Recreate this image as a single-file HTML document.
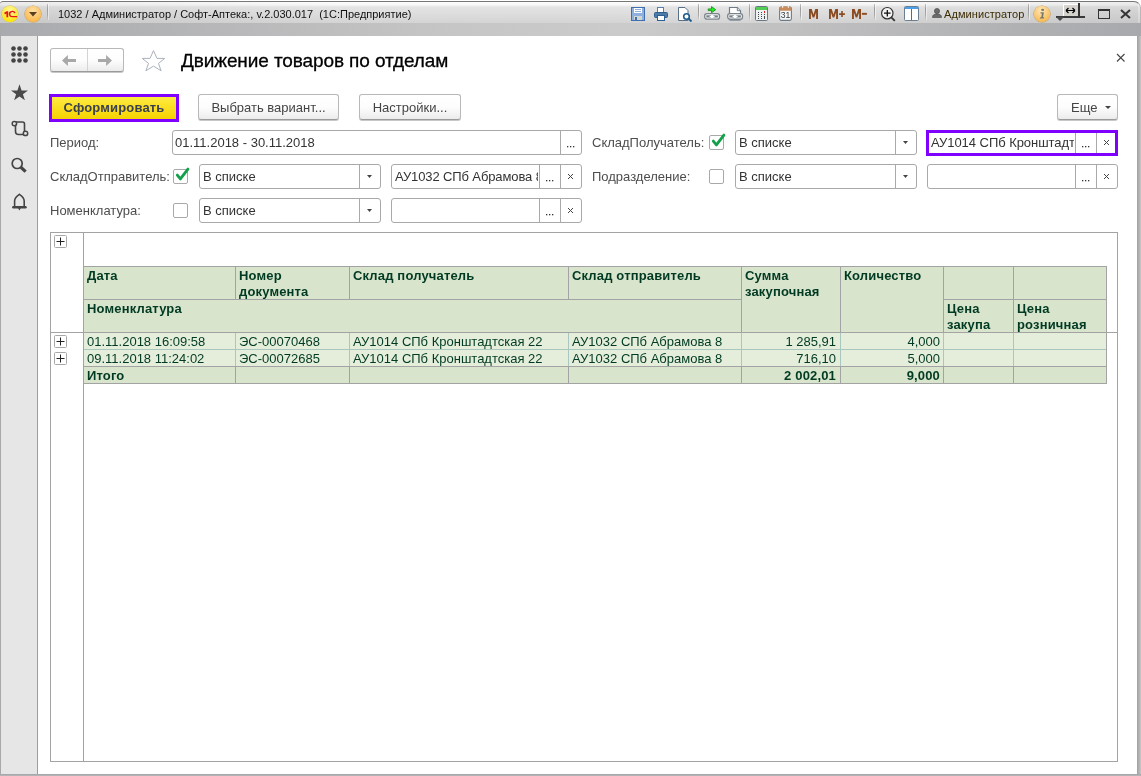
<!DOCTYPE html>
<html><head><meta charset="utf-8">
<style>
*{box-sizing:border-box}
html,body{margin:0;padding:0}
body{width:1141px;height:776px;position:relative;overflow:hidden;background:#fff;font-family:"Liberation Sans",sans-serif;color:#333}
.a{position:absolute}
#root{position:absolute;left:0;top:0;width:1141px;height:776px;will-change:transform}
.t{position:absolute;white-space:nowrap;font-size:13px;line-height:15px}
/* title bar */
#tb{left:0;top:1px;width:1141px;height:35px;border-top:1px solid #777;border-right:1px solid #b8b8b8;border-top-left-radius:3px;border-top-right-radius:7px;background:linear-gradient(#fdfdfd 0px,#f6f6f6 3px,#e4e4e4 5px,#d4d4d4 21px,#d4d4d4 22px)}
#tbline{left:2px;top:1px;width:1134px;height:1px;background:#777}
#band{left:0;top:23px;width:1141px;height:13px;background:linear-gradient(90deg,#a9aaad 0%,#c6c6c6 40%,#cbcbcb 55%,#a8a9ac 100%)}
#tbhl{left:0;top:2px;width:1138px;height:21px;background:linear-gradient(90deg,rgba(0,0,0,.06) 0%,rgba(0,0,0,0) 30%,rgba(0,0,0,0) 70%,rgba(0,0,0,.06) 100%)}
.sep{position:absolute;top:4px;width:1px;height:16px;background:linear-gradient(rgba(150,150,150,.5),#9a9a9a 30%,#a8a8a8 70%,rgba(180,180,180,.2));box-shadow:1px 0 0 rgba(255,255,255,.5)}
/* frame */
#lf{left:0;top:23px;width:1px;height:753px;background:#a8a8a8}
#sb{left:1px;top:36px;width:36px;height:738px;background:#e6e6e6}
#sbb{left:37px;top:36px;width:1px;height:738px;background:#9d9d9d}
#bf{left:0;top:774px;width:1141px;height:2px;background:linear-gradient(#a2a3a6,#b9b9bb)}
#rf{left:1137px;top:36px;width:4px;height:740px;background:linear-gradient(90deg,#9fa0a3,#b5b6b8 60%,#c8c8c8)}
/* buttons */
.btn{position:absolute;height:26px;border:1px solid #b8b8b8;border-bottom-color:#9a9a9a;border-radius:3px;background:linear-gradient(#ffffff,#fdfdfd 50%,#ececec);box-shadow:0 1px 0 #c8c8c8;color:#444;font-size:13px;line-height:25px;text-align:center;white-space:nowrap}
.inp{position:absolute;height:25px;border:1px solid #a9a9a9;border-radius:3px;background:#fff}
.div{position:absolute;top:0;width:1px;height:23px;background:#a9a9a9}
.lbl{position:absolute;white-space:nowrap;font-size:13px;line-height:15px;color:#4d4d4d}
.val{position:absolute;white-space:nowrap;font-size:13px;line-height:15px;color:#333}
.cb{position:absolute;width:15px;height:15px;border:1px solid #a9a9a9;border-radius:2px;background:#fff}
/* table */
.hl{position:absolute;height:1px;background:#a3a3a3}
.vl{position:absolute;width:1px;background:#a3a3a3}
.tx{position:absolute;white-space:nowrap;font-size:13px;line-height:16px;color:#003a22}
.b{font-weight:bold;letter-spacing:.16px}
</style></head><body><div id="root">

<!-- ============ TITLE BAR ============ -->
<div id="tb" class="a"></div>
<div id="tbhl" class="a"></div>
<div id="band" class="a"></div>


<!-- logo -->
<div class="a" style="left:2px;top:6px;width:16px;height:16px;border-radius:50%;background:radial-gradient(circle at 50% 30%,#fff6a8,#ffe600 80%);box-shadow:0 0 0 .5px #d8c040"></div>
<svg class="a" style="left:2px;top:6px" width="16" height="16"><path d="M2.2 6.8L4.6 5.2H6.2V11.2H4.4V7.6L2.9 8.4Z" fill="#e8121a"/><path d="M13.6 6.6A3.6 3.2 0 1 0 10.6 11.2H15.2V9.9H10.6A2 1.9 0 1 1 12.2 7.4Z" fill="#e8121a"/></svg>
<div class="a" style="left:25px;top:6px;width:16px;height:16px;border-radius:50%;background:radial-gradient(circle at 50% 30%,#ffe1a8,#f9b443 85%);box-shadow:0 0 0 .6px #c99a3a"></div>
<svg class="a" style="left:29px;top:12px" width="8" height="5"><path d="M0 0H8L4 4.5Z" fill="#5a4020"/></svg>
<div class="sep" style="left:47px"></div>
<div class="t" style="left:58px;top:8px;font-size:11px;line-height:13px;color:#111">1032 / Администратор / Софт-Аптека:, v.2.030.017&nbsp; (1С:Предприятие)</div>

<!-- toolbar icons -->
<svg class="a" style="left:631px;top:7px" width="14" height="14"><rect x=".5" y=".5" width="13" height="13" fill="#8fb0dc" stroke="#3f6fae"/><rect x="3" y="1" width="8" height="5" fill="#fff"/><rect x="4" y="2" width="6" height="1" fill="#8fb0dc"/><rect x="4" y="4" width="6" height="1" fill="#8fb0dc"/><rect x="3" y="9" width="8" height="4" fill="#d0d8d4"/><rect x="4" y="10" width="2" height="3" fill="#3f6fae"/></svg>
<svg class="a" style="left:654px;top:7px" width="14" height="14"><rect x="3.5" y=".5" width="6" height="5" fill="#fff" stroke="#5a7fa8"/><rect x=".5" y="5.5" width="13" height="5" rx="1" fill="#4e7ba8" stroke="#2f5f90"/><rect x="3.5" y="8.5" width="7" height="5" fill="#fff" stroke="#2f5f90"/></svg>
<svg class="a" style="left:678px;top:7px" width="15" height="15"><path d="M.5 .5H7L10 3.5V13.5H.5Z" fill="#fff" stroke="#5a6f88"/><circle cx="8.5" cy="9.5" r="2.8" fill="#fff" stroke="#1f5f8f" stroke-width="1.6"/><path d="M10.5 11.5L13.5 14.5" stroke="#1f5f8f" stroke-width="2"/></svg>
<div class="sep" style="left:698px"></div>
<svg class="a" style="left:704px;top:6px" width="17" height="15"><path d="M4.2 2.9H7.5V.6L11.7 3.7L7.5 6.8V4.6H4.2Z" fill="#22ee22" stroke="#1f8f1f" stroke-width=".9" stroke-linejoin="round"/><rect x=".7" y="7.6" width="14.8" height="5.6" rx="2.2" fill="#fbfbfb" stroke="#7b838b" stroke-width="1.3"/><rect x="2.3" y="9.3" width="4.6" height="2.2" fill="#76808a"/><rect x="9.3" y="9.3" width="4.6" height="2.2" fill="#76808a"/><rect x="5.6" y="9.9" width="5" height="1.1" fill="#fff"/></svg>
<svg class="a" style="left:727px;top:6px" width="17" height="16"><path d="M2.5 1.5H10.3L13.5 4.7V8.5H2.5Z" fill="#fff" stroke="#6d7b8a" stroke-width="1.2"/><path d="M10.3 1.5V4.7H13.5" fill="#dfe5ec" stroke="#6d7b8a" stroke-width=".9"/><rect x=".7" y="7.6" width="14.8" height="5.6" rx="2.2" fill="#fbfbfb" stroke="#7b838b" stroke-width="1.3"/><rect x="2.3" y="9.3" width="4.6" height="2.2" fill="#76808a"/><rect x="9.3" y="9.3" width="4.6" height="2.2" fill="#76808a"/><rect x="5.6" y="9.9" width="5" height="1.1" fill="#fff"/><rect x="2.5" y="13.4" width="11" height="1.2" fill="#6d7b8a"/></svg>
<div class="sep" style="left:749px"></div>
<svg class="a" style="left:755px;top:6px" width="13" height="15"><rect x=".5" y=".5" width="12" height="14" rx="1" fill="#eef1f4" stroke="#6a7884"/><rect x="1" y="1" width="11" height="3" fill="#55cc55"/><g fill="#444"><rect x="3" y="6" width="1" height="1"/><rect x="6" y="6" width="1" height="1"/><rect x="3" y="8" width="1" height="1"/><rect x="6" y="8" width="1" height="1"/><rect x="3" y="10" width="1" height="1"/><rect x="6" y="10" width="1" height="1"/><rect x="3" y="12" width="1" height="1"/><rect x="6" y="12" width="1" height="1"/><rect x="9" y="8" width="1" height="1"/><rect x="9" y="10" width="1" height="3"/></g><rect x="9" y="5" width="1" height="2" fill="#e02020"/></svg>
<svg class="a" style="left:779px;top:6px" width="13" height="15"><rect x=".6" y="1" width="11.8" height="13.4" rx="1.6" fill="#f5f8fb" stroke="#6f7c88" stroke-width="1.1"/><path d="M.5 4.8V2.4Q.5 .4 2.5 .4H10.5Q12.5 .4 12.5 2.4V4.8Z" fill="#c98b5b"/><rect x="3.2" y="0" width="1" height="1.8" fill="#fff"/><rect x="8.8" y="0" width="1" height="1.8" fill="#fff"/><text x="6.6" y="12.2" font-size="8.6" text-anchor="middle" fill="#3a3a3a" font-family="Liberation Sans">31</text></svg>
<div class="sep" style="left:800px"></div>
<svg class="a" style="left:809px;top:9px" width="60" height="10"><g fill="#8b4c22"><path d="M0 10V0H2.7L4.5 5.6L6.3 0H9V10H7.1V3.6L5.3 8.6H3.7L1.9 3.6V10Z"/><path transform="translate(20,0)" d="M0 10V0H2.7L4.5 5.6L6.3 0H9V10H7.1V3.6L5.3 8.6H3.7L1.9 3.6V10Z"/><path d="M32.2 2.1H33.8V4.3H35.9V5.9H33.8V8.1H32.2V5.9H30.1V4.3H32.2Z"/><path transform="translate(43,0)" d="M0 10V0H2.7L4.5 5.6L6.3 0H9V10H7.1V3.6L5.3 8.6H3.7L1.9 3.6V10Z"/><rect x="52.9" y="3.9" width="5" height="1.9"/></g></svg>
<div class="sep" style="left:874px"></div>
<svg class="a" style="left:880px;top:6px" width="16" height="16"><circle cx="7.3" cy="7.2" r="5.7" fill="#f4f4f4" stroke="#333" stroke-width="1.2"/><path d="M7.3 4V10.5M4 7.2H10.6" stroke="#111" stroke-width="1.3"/><path d="M11.3 11.3L14.8 14.8" stroke="#333" stroke-width="1.8"/></svg>
<svg class="a" style="left:904px;top:6px" width="15" height="15"><rect x=".5" y=".5" width="14" height="14" rx="1" fill="#fff" stroke="#6a7f94"/><rect x="1" y="1" width="13" height="2" fill="#4aa0e8"/><rect x="7" y="3" width="1" height="11" fill="#5a6a78"/></svg>
<div class="sep" style="left:925px"></div>
<svg class="a" style="left:932px;top:8px" width="10" height="10"><circle cx="5" cy="3" r="2.6" fill="#6a6a6a" stroke="#444" stroke-width=".6"/><path d="M.5 9.5C.5 6.5 2.5 6 5 6S9.5 6.5 9.5 9.5Z" fill="#6a6a6a" stroke="#444" stroke-width=".6"/></svg>
<div class="t" style="left:944px;top:8px;font-size:11px;line-height:13px;color:#3b2c05;letter-spacing:.08px">Администратор</div>
<div class="sep" style="left:1028px"></div>
<div class="a" style="left:1034px;top:6px;width:16px;height:16px;border-radius:50%;background:radial-gradient(circle at 45% 30%,#ffe7b8,#f5b54a 85%);box-shadow:0 0 0 .6px #c99a3a"></div>
<svg class="a" style="left:1034px;top:6px" width="16" height="16"><ellipse cx="8.6" cy="3.9" rx="1.5" ry="1.1" fill="#77776a"/><path d="M6.6 6.2H9.9L9 11.2H10.2L9.9 12.6H5.9L6.2 11.2H7.3L7.9 7.6H6.4Z" fill="#77776a"/></svg>
<!-- minimize w/ tooltip -->
<div class="a" style="left:1056px;top:16px;width:29px;height:2px;background:#3a3a3a"></div>
<svg class="a" style="left:1056px;top:17px" width="8" height="4"><path d="M0 0H8L4 4Z" fill="#4a4a4a"/></svg>
<div class="a" style="left:1063px;top:4px;width:15px;height:12px;background:#d6d2cc;border-left:1px solid #fff;border-top:1px solid #fff"></div>
<div class="a" style="left:1078px;top:3px;width:1.5px;height:15px;background:#333"></div>
<svg class="a" style="left:1065px;top:7px" width="11" height="7"><path d="M1 3.5H10M1 3.5L3.5 1M1 3.5L3.5 6M10 3.5L7.5 1M10 3.5L7.5 6" stroke="#000" stroke-width="1.2" fill="none"/></svg>
<div class="a" style="left:1098px;top:9px;width:12px;height:10px;border:1.6px solid #333;border-top-width:2.5px"></div>
<svg class="a" style="left:1120px;top:9px" width="11" height="10"><path d="M1 1L10 9M10 1L1 9" stroke="#333" stroke-width="2"/></svg>

<!-- ============ FRAME ============ -->
<div id="lf" class="a"></div>
<div id="sb" class="a"></div>
<div id="sbb" class="a"></div>
<div id="rf" class="a"></div>
<div id="bf" class="a"></div>

<!-- sidebar icons -->
<svg class="a" style="left:10px;top:45px" width="20" height="20"><g fill="#444"><circle cx="3.5" cy="3.5" r="2.3"/><circle cx="9.5" cy="3.5" r="2.3"/><circle cx="15.5" cy="3.5" r="2.3"/><circle cx="3.5" cy="9.5" r="2.3"/><circle cx="9.5" cy="9.5" r="2.3"/><circle cx="15.5" cy="9.5" r="2.3"/><circle cx="3.5" cy="15.5" r="2.3"/><circle cx="9.5" cy="15.5" r="2.3"/><circle cx="15.5" cy="15.5" r="2.3"/></g></svg>
<svg class="a" style="left:10px;top:83px" width="20" height="20"><path d="M9.5 1.3L11.6 7.5H18L12.9 11.3L14.9 17.2L9.5 13.6L4.1 17.2L6.1 11.3L1 7.5H7.4Z" fill="#4a4a4a"/></svg>
<svg class="a" style="left:10px;top:119px" width="20" height="18"><path d="M5.5 3H12.5Q14.5 3 14.5 5V14M14.5 14V14.5M5.5 3V12.5Q5.5 15.5 8.5 15.5H15" fill="none" stroke="#444" stroke-width="1.6"/><circle cx="4.4" cy="4.6" r="2.2" fill="#e6e6e6" stroke="#444" stroke-width="1.5"/><circle cx="15.5" cy="14.4" r="2.2" fill="#e6e6e6" stroke="#444" stroke-width="1.5"/></svg>
<svg class="a" style="left:10px;top:156px" width="20" height="20"><circle cx="7.2" cy="7.5" r="5" fill="none" stroke="#444" stroke-width="1.7"/><path d="M11 11.3L15.6 15.7" stroke="#444" stroke-width="3.2"/></svg>
<svg class="a" style="left:10px;top:192px" width="20" height="20"><path d="M4.6 14V9C4.6 6 6.5 4.3 9.4 2.3C12.3 4.3 14.2 6 14.2 9V14" fill="none" stroke="#444" stroke-width="1.6"/><path d="M3.3 15.2H15.5" stroke="#444" stroke-width="2.4" stroke-linecap="round"/><path d="M8 16L9.4 18.4L10.8 16Z" fill="#444"/></svg>

<!-- ============ FORM HEADER ============ -->
<div class="btn" style="left:50px;top:48px;width:74px;height:24px"></div>
<div class="a" style="left:87px;top:49px;width:1px;height:22px;background:#d4d4d4"></div>
<svg class="a" style="left:61px;top:55px" width="16" height="11"><path d="M1 5.5L6.9 0V4H15V7H6.9V11Z" fill="#a8a8a8"/></svg>
<svg class="a" style="left:97px;top:55px" width="16" height="11"><path d="M15 5.5L9.1 0V4H1V7H9.1V11Z" fill="#a8a8a8"/></svg>
<svg class="a" style="left:141px;top:49px" width="25" height="24"><path d="M12.5 1.6L16 9.4H23.8L17.5 14.4L20.1 21.8L12.5 17.1L4.9 21.8L7.5 14.4L1.2 9.4H9Z" fill="none" stroke="#a9b1ba" stroke-width="1"/></svg>
<div class="t" style="left:181px;top:50px;font-size:19px;line-height:21px;color:#000;letter-spacing:-0.1px;-webkit-text-stroke:0.3px #000">Движение товаров по отделам</div>
<svg class="a" style="left:1116px;top:53px" width="10" height="10"><path d="M1 1L8.5 8.5M8.5 1L1 8.5" stroke="#444" stroke-width="1.1"/></svg>

<!-- buttons -->
<div class="a" style="left:49px;top:94px;width:130px;height:28px;border:3px solid #8000ff;background:linear-gradient(#ffea40,#f5d200)"></div>
<div class="t b" style="left:52px;top:100px;width:124px;text-align:center;color:#3a4050">Сформировать</div>
<div class="btn" style="left:198px;top:94px;width:141px">Выбрать вариант...</div>
<div class="btn" style="left:359px;top:94px;width:102px">Настройки...</div>
<div class="btn" style="left:1057px;top:94px;width:61px;text-align:left;padding-left:13px">Еще</div>
<svg class="a" style="left:1105px;top:106px" width="7" height="4"><path d="M0 0H6L3 3Z" fill="#444"/></svg>

<!-- row 1 -->
<div class="lbl" style="left:50px;top:135px">Период:</div>
<div class="inp" style="left:172px;top:130px;width:410px"><div class="div" style="left:387px"></div></div>
<div class="val" style="left:175px;top:135px">01.11.2018 - 30.11.2018</div>
<svg class="a" style="left:567px;top:146px" width="9" height="3"><g fill="#333"><rect x="0" y="0" width="1.3" height="1.3"/><rect x="3" y="0" width="1.3" height="1.3"/><rect x="6" y="0" width="1.3" height="1.3"/></g></svg>

<div class="lbl" style="left:592px;top:135px">СкладПолучатель:</div>
<div class="cb" style="left:709px;top:135px"></div>
<svg class="a" style="left:704px;top:126px" width="30" height="30"><path d="M9.3 15.1L12.4 18.9L19.9 9.1" fill="none" stroke="#12a04a" stroke-width="2.8" stroke-linecap="round" stroke-linejoin="round"/></svg>
<div class="inp" style="left:735px;top:130px;width:182px"><div class="div" style="left:159px"></div></div>
<div class="val" style="left:739px;top:135px">В списке</div>
<svg class="a" style="left:903px;top:141px" width="6" height="4"><path d="M0 0H5L2.5 3Z" fill="#444"/></svg>

<div class="inp" style="left:926px;top:130px;width:192px;height:26px;border:3px solid #8000ff;border-radius:0"><div class="div" style="left:146px;top:0;height:20px"></div><div class="div" style="left:167px;top:0;height:20px"></div></div>
<div class="val" style="left:931px;top:135px;width:143px;overflow:hidden;letter-spacing:-0.05px">АУ1014 СПб Кронштадтская 22</div>
<svg class="a" style="left:1082px;top:146px" width="9" height="3"><g fill="#333"><rect x="0" y="0" width="1.3" height="1.3"/><rect x="3" y="0" width="1.3" height="1.3"/><rect x="6" y="0" width="1.3" height="1.3"/></g></svg>
<svg class="a" style="left:1103px;top:139px" width="8" height="8"><path d="M1 1L6 6M6 1L1 6" stroke="#444" stroke-width="1"/></svg>

<!-- row 2 -->
<div class="lbl" style="left:50px;top:169px">СкладОтправитель:</div>
<div class="cb" style="left:173px;top:169px"></div>
<svg class="a" style="left:168px;top:160px" width="30" height="30"><path d="M9.3 15.1L12.4 18.9L19.9 9.1" fill="none" stroke="#12a04a" stroke-width="2.8" stroke-linecap="round" stroke-linejoin="round"/></svg>
<div class="inp" style="left:199px;top:164px;width:182px"><div class="div" style="left:159px"></div></div>
<div class="val" style="left:203px;top:169px">В списке</div>
<svg class="a" style="left:367px;top:175px" width="6" height="4"><path d="M0 0H5L2.5 3Z" fill="#444"/></svg>
<div class="inp" style="left:391px;top:164px;width:191px"><div class="div" style="left:147px"></div><div class="div" style="left:168px"></div></div>
<div class="val" style="left:395px;top:169px;width:143px;overflow:hidden;letter-spacing:-0.12px">АУ1032 СПб Абрамова 8</div>
<svg class="a" style="left:546px;top:180px" width="9" height="3"><g fill="#333"><rect x="0" y="0" width="1.3" height="1.3"/><rect x="3" y="0" width="1.3" height="1.3"/><rect x="6" y="0" width="1.3" height="1.3"/></g></svg>
<svg class="a" style="left:567px;top:173px" width="8" height="8"><path d="M1 1L6 6M6 1L1 6" stroke="#444" stroke-width="1"/></svg>

<div class="lbl" style="left:592px;top:169px">Подразделение:</div>
<div class="cb" style="left:709px;top:169px"></div>
<div class="inp" style="left:735px;top:164px;width:182px"><div class="div" style="left:159px"></div></div>
<div class="val" style="left:739px;top:169px">В списке</div>
<svg class="a" style="left:903px;top:175px" width="6" height="4"><path d="M0 0H5L2.5 3Z" fill="#444"/></svg>
<div class="inp" style="left:927px;top:164px;width:191px"><div class="div" style="left:147px"></div><div class="div" style="left:168px"></div></div>
<svg class="a" style="left:1082px;top:180px" width="9" height="3"><g fill="#333"><rect x="0" y="0" width="1.3" height="1.3"/><rect x="3" y="0" width="1.3" height="1.3"/><rect x="6" y="0" width="1.3" height="1.3"/></g></svg>
<svg class="a" style="left:1103px;top:173px" width="8" height="8"><path d="M1 1L6 6M6 1L1 6" stroke="#444" stroke-width="1"/></svg>

<!-- row 3 -->
<div class="lbl" style="left:50px;top:203px">Номенклатура:</div>
<div class="cb" style="left:173px;top:203px"></div>
<div class="inp" style="left:199px;top:198px;width:182px"><div class="div" style="left:159px"></div></div>
<div class="val" style="left:203px;top:203px">В списке</div>
<svg class="a" style="left:367px;top:209px" width="6" height="4"><path d="M0 0H5L2.5 3Z" fill="#444"/></svg>
<div class="inp" style="left:391px;top:198px;width:191px"><div class="div" style="left:147px"></div><div class="div" style="left:168px"></div></div>
<svg class="a" style="left:546px;top:214px" width="9" height="3"><g fill="#333"><rect x="0" y="0" width="1.3" height="1.3"/><rect x="3" y="0" width="1.3" height="1.3"/><rect x="6" y="0" width="1.3" height="1.3"/></g></svg>
<svg class="a" style="left:567px;top:207px" width="8" height="8"><path d="M1 1L6 6M6 1L1 6" stroke="#444" stroke-width="1"/></svg>

<!-- ============ TABLE ============ -->
<div class="a" style="left:50px;top:232px;width:1068px;height:1px;background:#a3a3a3"></div>
<div class="a" style="left:50px;top:761px;width:1068px;height:1px;background:#a3a3a3"></div>
<div class="a" style="left:50px;top:232px;width:1px;height:530px;background:#a3a3a3"></div>
<div class="a" style="left:1117px;top:232px;width:1px;height:530px;background:#a3a3a3"></div>
<div class="a" style="left:83px;top:232px;width:1px;height:530px;background:#a3a3a3"></div>
<div class="a" style="left:84px;top:267px;width:1022px;height:65px;background:#d8e4cc"></div>
<div class="a" style="left:84px;top:333px;width:1022px;height:33px;background:#e4eedb"></div>
<div class="a" style="left:84px;top:367px;width:1022px;height:16px;background:#d8e4cc"></div>
<div class="a" style="left:83px;top:266px;width:1024px;height:1px;background:#a3a3a3"></div>
<div class="a" style="left:84px;top:299px;width:657px;height:1px;background:#a3a3a3"></div>
<div class="a" style="left:943px;top:299px;width:164px;height:1px;background:#a3a3a3"></div>
<div class="a" style="left:50px;top:332px;width:1068px;height:1px;background:#a3a3a3"></div>
<div class="a" style="left:84px;top:349px;width:1022px;height:1px;background:#a9c6bf"></div>
<div class="a" style="left:84px;top:366px;width:1022px;height:1px;background:#a3a3a3"></div>
<div class="a" style="left:83px;top:383px;width:1024px;height:1px;background:#a3a3a3"></div>
<div class="a" style="left:235px;top:266px;width:1px;height:34px;background:#a3a3a3"></div>
<div class="a" style="left:349px;top:266px;width:1px;height:34px;background:#a3a3a3"></div>
<div class="a" style="left:568px;top:266px;width:1px;height:34px;background:#a3a3a3"></div>
<div class="a" style="left:741px;top:266px;width:1px;height:67px;background:#a3a3a3"></div>
<div class="a" style="left:840px;top:266px;width:1px;height:67px;background:#a3a3a3"></div>
<div class="a" style="left:943px;top:266px;width:1px;height:67px;background:#a3a3a3"></div>
<div class="a" style="left:1013px;top:266px;width:1px;height:67px;background:#a3a3a3"></div>
<div class="a" style="left:1106px;top:266px;width:1px;height:67px;background:#a3a3a3"></div>
<div class="a" style="left:235px;top:333px;width:1px;height:33px;background:#a9c6bf"></div>
<div class="a" style="left:349px;top:333px;width:1px;height:33px;background:#a9c6bf"></div>
<div class="a" style="left:568px;top:333px;width:1px;height:33px;background:#a9c6bf"></div>
<div class="a" style="left:741px;top:333px;width:1px;height:33px;background:#a9c6bf"></div>
<div class="a" style="left:840px;top:333px;width:1px;height:33px;background:#a9c6bf"></div>
<div class="a" style="left:943px;top:333px;width:1px;height:33px;background:#a9c6bf"></div>
<div class="a" style="left:1013px;top:333px;width:1px;height:33px;background:#a9c6bf"></div>
<div class="a" style="left:1106px;top:333px;width:1px;height:34px;background:#a3a3a3"></div>
<div class="a" style="left:235px;top:366px;width:1px;height:17px;background:#a3a3a3"></div>
<div class="a" style="left:349px;top:366px;width:1px;height:17px;background:#a3a3a3"></div>
<div class="a" style="left:568px;top:366px;width:1px;height:17px;background:#a3a3a3"></div>
<div class="a" style="left:741px;top:366px;width:1px;height:17px;background:#a3a3a3"></div>
<div class="a" style="left:840px;top:366px;width:1px;height:17px;background:#a3a3a3"></div>
<div class="a" style="left:943px;top:366px;width:1px;height:17px;background:#a3a3a3"></div>
<div class="a" style="left:1013px;top:366px;width:1px;height:17px;background:#a3a3a3"></div>
<div class="a" style="left:1106px;top:366px;width:1px;height:17px;background:#a3a3a3"></div>
<div class="tx b" style="left:87px;top:268px">Дата</div>
<div class="tx b" style="left:239px;top:268px">Номер<br>документа</div>
<div class="tx b" style="left:353px;top:268px">Склад получатель</div>
<div class="tx b" style="left:572px;top:268px">Склад отправитель</div>
<div class="tx b" style="left:745px;top:268px">Сумма<br>закупочная</div>
<div class="tx b" style="left:844px;top:268px">Количество</div>
<div class="tx b" style="left:87px;top:301px">Номенклатура</div>
<div class="tx b" style="left:947px;top:301px">Цена<br>закупа</div>
<div class="tx b" style="left:1017px;top:301px">Цена<br>розничная</div>
<div class="tx" style="left:87px;top:334px">01.11.2018 16:09:58</div>
<div class="tx" style="left:239px;top:334px">ЭС-00070468</div>
<div class="tx" style="left:353px;top:334px">АУ1014 СПб Кронштадтская 22</div>
<div class="tx" style="left:572px;top:334px">АУ1032 СПб Абрамова 8</div>
<div class="tx" style="left:746px;top:334px;width:90px;text-align:right">1 285,91</div>
<div class="tx" style="left:850px;top:334px;width:90px;text-align:right">4,000</div>
<div class="tx" style="left:87px;top:351px">09.11.2018 11:24:02</div>
<div class="tx" style="left:239px;top:351px">ЭС-00072685</div>
<div class="tx" style="left:353px;top:351px">АУ1014 СПб Кронштадтская 22</div>
<div class="tx" style="left:572px;top:351px">АУ1032 СПб Абрамова 8</div>
<div class="tx" style="left:746px;top:351px;width:90px;text-align:right">716,10</div>
<div class="tx" style="left:850px;top:351px;width:90px;text-align:right">5,000</div>
<div class="tx b" style="left:87px;top:368px">Итого</div>
<div class="tx b" style="left:746px;top:368px;width:90px;text-align:right">2 002,01</div>
<div class="tx b" style="left:850px;top:368px;width:90px;text-align:right">9,000</div>
<svg class="a" style="left:54px;top:235px" width="13" height="13"><rect x=".5" y=".5" width="12" height="12" rx="1" fill="#fff" stroke="#a8a8a8"/><path d="M6.5 2.5V10.5M2.5 6.5H10.5" stroke="#222" stroke-width="1"/></svg>
<svg class="a" style="left:54px;top:335px" width="13" height="13"><rect x=".5" y=".5" width="12" height="12" rx="1" fill="#fff" stroke="#a8a8a8"/><path d="M6.5 2.5V10.5M2.5 6.5H10.5" stroke="#222" stroke-width="1"/></svg>
<svg class="a" style="left:54px;top:352px" width="13" height="13"><rect x=".5" y=".5" width="12" height="12" rx="1" fill="#fff" stroke="#a8a8a8"/><path d="M6.5 2.5V10.5M2.5 6.5H10.5" stroke="#222" stroke-width="1"/></svg>

</div></body></html>
